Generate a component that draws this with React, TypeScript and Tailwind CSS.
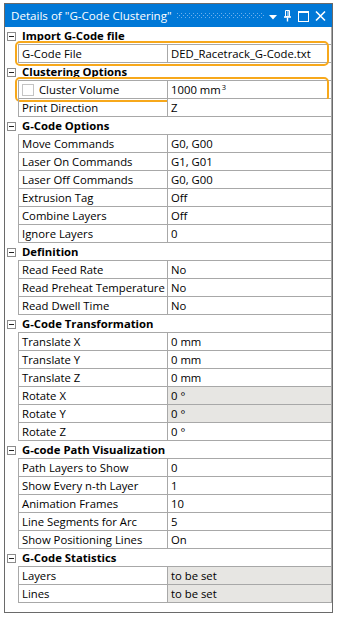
import React from "react";

type Row = {
  label: string;
  value: React.ReactNode;
  gray?: boolean;
  checkbox?: boolean;
  highlight?: boolean;
};

type Section = { title: string; rows: Row[] };

const sections: Section[] = [
  {
    title: "Import G-Code file",
    rows: [{ label: "G-Code File", value: "DED_Racetrack_G-Code.txt", highlight: true }],
  },
  {
    title: "Clustering Options",
    rows: [
      {
        label: "Cluster Volume",
        value: (
          <>
            1000 mm<span className="text-[7.5px] relative -top-[4px] ml-[1px]">3</span>
          </>
        ),
        checkbox: true,
        highlight: true,
      },
      { label: "Print Direction", value: "Z" },
    ],
  },
  {
    title: "G-Code Options",
    rows: [
      { label: "Move Commands", value: "G0, G00" },
      { label: "Laser On Commands", value: "G1, G01" },
      { label: "Laser Off Commands", value: "G0, G00" },
      { label: "Extrusion Tag", value: "Off" },
      { label: "Combine Layers", value: "Off" },
      { label: "Ignore Layers", value: "0" },
    ],
  },
  {
    title: "Definition",
    rows: [
      { label: "Read Feed Rate", value: "No" },
      { label: "Read Preheat Temperature", value: "No" },
      { label: "Read Dwell Time", value: "No" },
    ],
  },
  {
    title: "G-Code Transformation",
    rows: [
      { label: "Translate X", value: "0 mm" },
      { label: "Translate Y", value: "0 mm" },
      { label: "Translate Z", value: "0 mm" },
      { label: "Rotate X", value: "0 °", gray: true },
      { label: "Rotate Y", value: "0 °", gray: true },
      { label: "Rotate Z", value: "0 °" },
    ],
  },
  {
    title: "G-code Path Visualization",
    rows: [
      { label: "Path Layers to Show", value: "0" },
      { label: "Show Every n-th Layer", value: "1" },
      { label: "Animation Frames", value: "10" },
      { label: "Line Segments for Arc", value: "5" },
      { label: "Show Positioning Lines", value: "On" },
    ],
  },
  {
    title: "G-Code Statistics",
    rows: [
      { label: "Layers", value: "to be set", gray: true },
      { label: "Lines", value: "to be set", gray: true },
    ],
  },
];

const TitleIcons = () => (
  <div className="flex items-center">
    {/* dropdown */}
    <svg width="16" height="23" viewBox="0 0 16 23">
      <path d="M4 11h8l-4 4.5z" fill="#fff" />
    </svg>
    {/* pin */}
    <svg width="14" height="23" viewBox="0 0 14 23">
      <path d="M4.5 6.5h4v6h-4z" fill="none" stroke="#fff" strokeWidth="1" />
      <path d="M7 7v5.5" stroke="#fff" strokeWidth="1" />
      <path d="M3 13h7" stroke="#fff" strokeWidth="1.6" />
      <path d="M6.5 13.5v4" stroke="#fff" strokeWidth="1.4" />
    </svg>
    {/* maximize */}
    <svg width="18" height="23" viewBox="0 0 18 23">
      <rect x="3.5" y="7.5" width="10" height="10" fill="none" stroke="#fff" strokeWidth="1" />
      <path d="M3.5 8h10" stroke="#fff" strokeWidth="2" />
    </svg>
    {/* close */}
    <svg width="16" height="23" viewBox="0 0 16 23">
      <path d="M3 7.5l9 9M12 7.5l-9 9" stroke="#fff" strokeWidth="1.6" />
    </svg>
  </div>
);

const Grip = () => (
  <svg width="88" height="5" className="ml-[5px] shrink-0">
    <defs>
      <pattern id="grip" width="4" height="4" patternUnits="userSpaceOnUse">
        <rect x="0" y="0" width="1" height="1" fill="#6fb0ec" />
        <rect x="2" y="2" width="1" height="1" fill="#6fb0ec" />
      </pattern>
    </defs>
    <rect width="88" height="5" fill="url(#grip)" />
  </svg>
);

const HeaderRow = ({ title }: { title: string }) => (
  <div className="flex h-[18px]">
    <div className="w-[13px] flex items-center justify-start pl-[2px]">
      <div className="w-[9px] h-[9px] border border-[#8c8c8c] flex items-center justify-center bg-white">
        <div className="w-[5px] h-[1px] bg-[#222]" />
      </div>
    </div>
    <div className="flex-1 border-b border-r border-[#a8a8a8] pl-[4px] leading-[17px] font-bold text-[11.3px] text-black whitespace-nowrap">
      {title}
    </div>
  </div>
);

const DataRow = ({ row }: { row: Row }) => (
  <div className="flex h-[18px] relative">
    <div className="w-[13px]" />
    <div className="w-[150px] border-l border-b border-r border-[#a8a8a8] pl-[3px] leading-[17px] flex items-center whitespace-nowrap overflow-hidden">
      {row.checkbox && (
        <span className="inline-block w-[12px] h-[12px] border border-[#c4c4c4] bg-white mr-[5px] shrink-0" />
      )}
      <span>{row.label}</span>
    </div>
    <div
      className={`flex-1 border-b border-r border-[#a8a8a8] pl-[3px] leading-[17px] whitespace-nowrap ${
        row.gray ? "bg-[#e7e6e3]" : "bg-white"
      }`}
    >
      {row.value}
    </div>
    {row.highlight && (
      <div className="pointer-events-none absolute left-[10px] top-[-4px] w-[314px] h-[25px] border-2 border-[#f7a81b] rounded-[5px]" />
    )}
  </div>
);

export default function App() {
  return (
    <div className="w-[337px] h-[623px] bg-white pt-[3px] pl-[4px] font-['Open_Sans','Noto_Sans',sans-serif] text-[11.3px] text-black">
      <div className="w-[329px] border border-[#6a6a6a] bg-white pb-[9px]">
        <div className="h-[23px] bg-[#0078d7] flex items-center pl-[6px] pr-[7px]">
          <span className="text-white text-[11.6px] leading-[23px] whitespace-nowrap">
            Details of "G-Code Clustering"
          </span>
          <Grip />
          <div className="flex-1" />
          <TitleIcons />
        </div>
        {sections.map((s) => (
          <div key={s.title}>
            <HeaderRow title={s.title} />
            {s.rows.map((r) => (
              <DataRow key={r.label} row={r} />
            ))}
          </div>
        ))}
      </div>
    </div>
  );
}
